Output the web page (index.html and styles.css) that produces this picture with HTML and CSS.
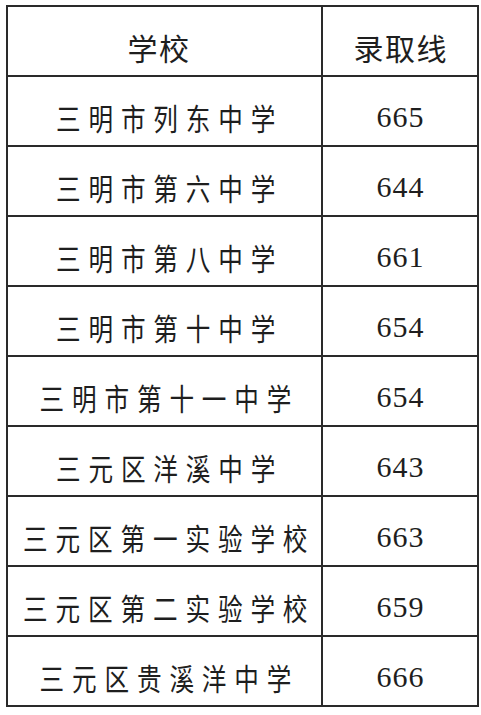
FILE: index.html
```html
<!DOCTYPE html>
<html lang="zh">
<head>
<meta charset="utf-8">
<link rel="stylesheet" href="styles.css">
</head>
<body>
<table class="scores">
  <colgroup><col class="c-school"><col class="c-score"></colgroup>
  <tr class="head"><td><div class="cell"><span class="h h-school">学校</span></div></td><td><div class="cell"><span class="h">录取线</span></div></td></tr>
  <tr><td><div class="cell"><span class="n">三明市列东中学</span></div></td><td><div class="cell"><span class="d">665</span></div></td></tr>
  <tr><td><div class="cell"><span class="n">三明市第六中学</span></div></td><td><div class="cell"><span class="d">644</span></div></td></tr>
  <tr><td><div class="cell"><span class="n">三明市第八中学</span></div></td><td><div class="cell"><span class="d">661</span></div></td></tr>
  <tr><td><div class="cell"><span class="n">三明市第十中学</span></div></td><td><div class="cell"><span class="d">654</span></div></td></tr>
  <tr><td><div class="cell"><span class="n">三明市第十一中学</span></div></td><td><div class="cell"><span class="d">654</span></div></td></tr>
  <tr><td><div class="cell"><span class="n">三元区洋溪中学</span></div></td><td><div class="cell"><span class="d">643</span></div></td></tr>
  <tr><td><div class="cell"><span class="n">三元区第一实验学校</span></div></td><td><div class="cell"><span class="d">663</span></div></td></tr>
  <tr><td><div class="cell"><span class="n">三元区第二实验学校</span></div></td><td><div class="cell"><span class="d">659</span></div></td></tr>
  <tr><td><div class="cell"><span class="n">三元区贵溪洋中学</span></div></td><td><div class="cell"><span class="d">666</span></div></td></tr>
</table>
</body>
</html>
```
FILE: styles.css
```css
html, body {
  margin: 0;
  padding: 0;
  background: #fff;
}
body {
  padding: 5px 0 0 6px;
}
.scores {
  border-collapse: collapse;
  width: 471px;
  table-layout: fixed;
  border: 2px solid #2a2a2a;
}
.c-school { width: 315px; }
.c-score { width: 156px; }
.scores tr { height: 70px; }
.scores td {
  border: 2px solid #2a2a2a;
  padding: 12px 0 0 0;
  vertical-align: middle;
  color: #1e1e1e;
  line-height: 1;
}
.cell {
  display: flex;
  justify-content: center;
  white-space: nowrap;
}
.h {
  font-family: "Noto Sans CJK SC", sans-serif;
  font-size: 30px;
  font-weight: 400;
  letter-spacing: 1.5px;
  margin-right: -1.5px;
}
.h-school {
  margin-right: 11px;
}
.n {
  flex: none;
  font-family: "Noto Sans CJK SC", sans-serif;
  font-size: 30px;
  font-weight: 400;
  letter-spacing: 9.6px;
  margin-right: -9.6px;
  transform: scaleX(0.82);
}
.d {
  font-family: "Liberation Serif", "Times New Roman", serif;
  font-size: 30px;
  letter-spacing: 1px;
  margin-right: -1px;
}
```
